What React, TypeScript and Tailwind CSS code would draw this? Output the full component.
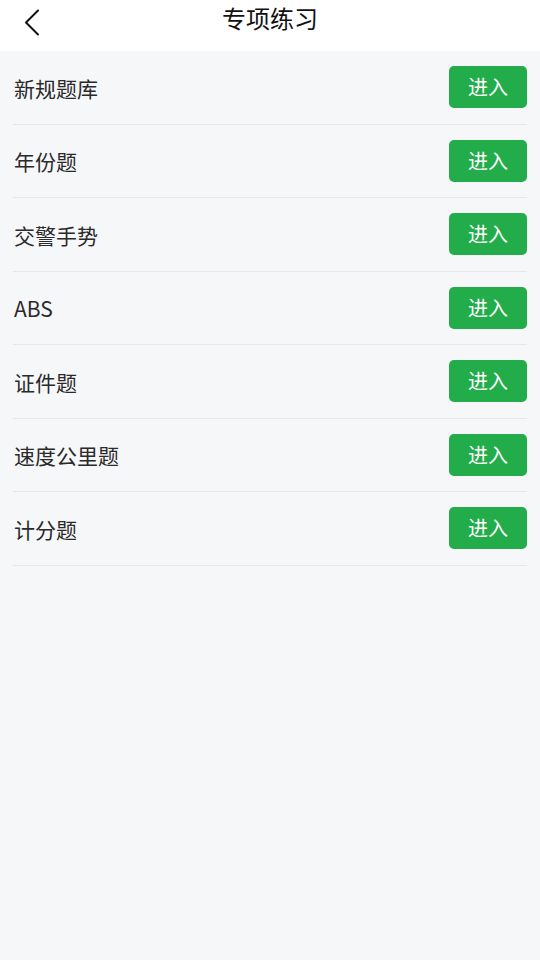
const items = ["新规题库", "年份题", "交警手势", "ABS", "证件题", "速度公里题", "计分题"];

export default function App() {
  return (
    <div
      className="min-h-[960px] w-[540px] bg-[#f6f7f9]"
      style={{ fontFamily: '"Noto Sans CJK SC", "Noto Sans", sans-serif' }}
    >
      <div className="relative flex h-[51px] items-center justify-center bg-white">
        <button className="absolute left-[19px] top-[5px] p-1">
          <svg width="18" height="27" viewBox="0 0 18 27" fill="none">
            <path d="M15 1.5 L3 13.5 L15 25.5" stroke="#111" strokeWidth="2" strokeLinecap="round" strokeLinejoin="round" />
          </svg>
        </button>
        <h1 className="-mt-[15px] text-[24px] leading-none text-[#111]">专项练习</h1>
      </div>
      <div className="px-[13px]">
        {items.map((name) => (
          <div key={name} className="flex h-[73.5px] items-center justify-between border-b border-[#e6e7ea]">
            <span className="mt-[2px] pl-[1px] text-[21px] text-[#2a2a2a]">{name}</span>
            <button className="flex h-[42px] w-[78px] items-center justify-center rounded-[5px] bg-[#22ad4a] text-[20px] text-white">
              进入
            </button>
          </div>
        ))}
      </div>
    </div>
  );
}
